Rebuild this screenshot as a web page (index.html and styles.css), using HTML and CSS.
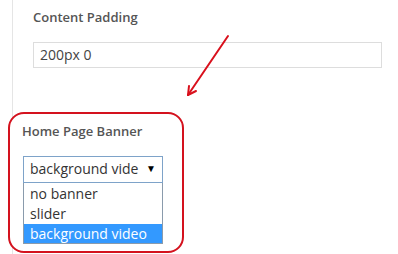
FILE: index.html
```html
<!DOCTYPE html>
<html>
<head>
	<meta charset="utf-8">
	<title>Theme Options</title>
	<link rel="stylesheet" href="styles.css">
</head>
<body>
	<div class="page">
		<div class="field">
			<h4 class="label">Content Padding</h4>
			<div class="text-input">200px 0</div>
		</div>

		<div class="field marked">
			<h4 class="label">Home Page Banner</h4>
			<div class="select">
				<span class="select-value">background vide</span>
				<span class="select-caret">&#9660;</span>
			</div>
			<ul class="options">
				<li>no banner</li>
				<li>slider</li>
				<li class="selected">background video</li>
			</ul>
		</div>
	</div>

	<!-- annotation arrow -->
	<svg class="arrow" width="398" height="254" viewBox="0 0 398 254">
		<line x1="228" y1="36" x2="188" y2="95" />
		<line x1="188" y1="95" x2="189" y2="86" />
		<line x1="188" y1="95" x2="196" y2="91" />
	</svg>
</body>
</html>
```

FILE: styles.css
```css
body {
	margin: 0;
	background: #fff;
	font-family: "Open Sans", "Liberation Sans", sans-serif;
	color: #333;
	width: 398px;
	height: 254px;
	overflow: hidden;
	position: relative;
}
.page {
	margin-left: 12px;
	border-left: 1px solid #e5e5e5;
	height: 254px;
	box-sizing: border-box;
	padding-top: 8px;
}
.field { padding-left: 20px; }
.label {
	margin: 0 0 16px;
	font-size: 13px;
	font-weight: 600;
	line-height: 18px;
	color: #555;
}
.text-input {
	width: 349px;
	height: 26px;
	box-sizing: border-box;
	border: 1px solid #ddd;
	padding: 0 6px;
	font-size: 14px;
	line-height: 23px;
	color: #444;
}
/* red box drawn round the banner option */
.field.marked {
	margin: 44px 0 0 -5px;
	width: 176px;
	height: 141px;
	box-sizing: border-box;
	border: 2px solid #d4121e;
	border-radius: 16px;
	background: #fff;
	padding: 8px 0 0 12px;
}
.select {
	width: 140px;
	height: 27px;
	box-sizing: border-box;
	margin-left: 1px;
	border: 1px solid #7ea3c9;
	display: flex;
	align-items: center;
	justify-content: space-between;
	padding: 0 6px 1px 6px;
	font-size: 14px;
	line-height: 20px;
}
.select-caret {
	font-size: 10px;
	color: #000;
	padding-bottom: 2px;
}
.options {
	list-style: none;
	margin: 0 0 0 1px;
	padding: 1px 0 0;
	width: 140px;
	box-sizing: border-box;
	border: 1px solid #8a9bac;
	border-top: none;
	font-size: 14px;
	line-height: 20px;
}
.options li { padding-left: 6px; }
.options li.selected {
	background: #3399ff;
	color: #fff;
	line-height: 19px;
}
.arrow {
	position: absolute;
	left: 0;
	top: 0;
	stroke: #d9101c;
	stroke-width: 2;
	stroke-linecap: round;
}
```
